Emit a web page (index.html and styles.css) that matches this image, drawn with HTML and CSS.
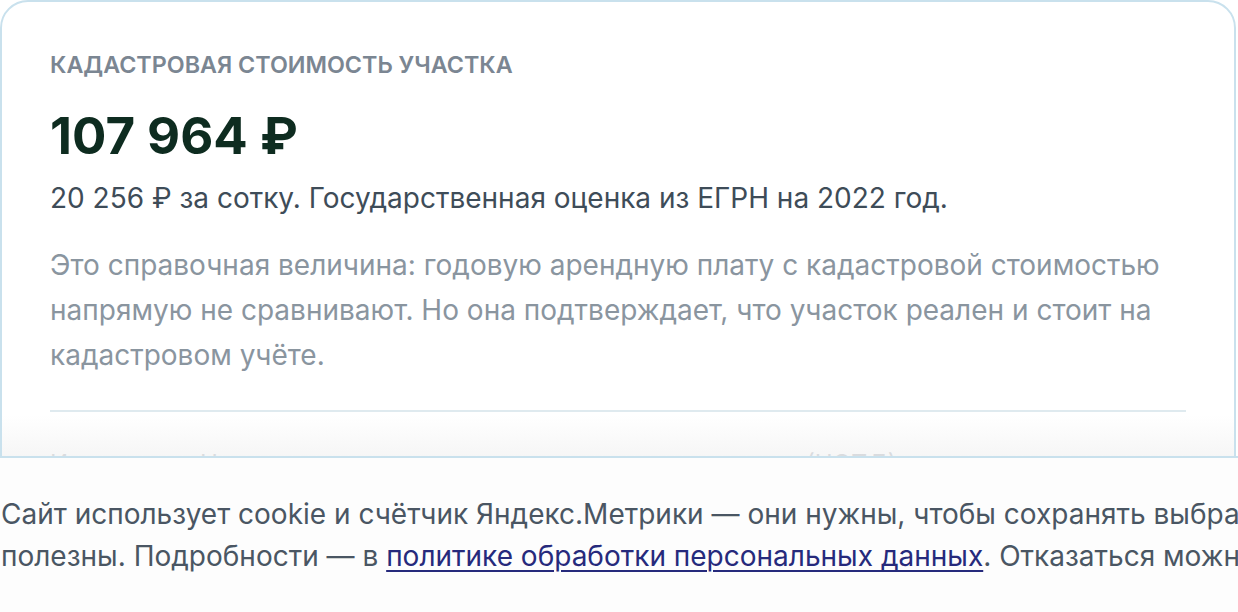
FILE: index.html
```html
<!DOCTYPE html>
<html lang="ru">
<head>
<meta charset="UTF-8">
<meta name="viewport" content="width=device-width, initial-scale=1.0">
<title>Кадастровая стоимость участка</title>
<link rel="stylesheet" href="styles.css">
</head>
<body>

<!-- Карточка со стоимостью -->
<section class="cost-card">
    <h3 class="cost-label">Кадастровая стоимость участка</h3>
    <div class="cost-value">107 964 ₽</div>
    <p class="cost-sub">20 256 ₽ за сотку. Государственная оценка из ЕГРН на 2022 год.</p>
    <p class="cost-note">Это справочная величина: годовую арендную плату с кадастровой стоимостью напрямую не сравнивают. Но она подтверждает, что участок реален и стоит на кадастровом учёте.</p>
    <hr class="cost-divider">
    <p class="cost-source">Источник — Национальная система пространственных данных (НСПД)</p>
    <div class="cost-fade"></div>
</section>

<!-- Cookie banner -->
<div class="cookie-banner">
    <p class="cookie-text">Сайт использует cookie и счётчик Яндекс.Метрики — они нужны, чтобы сохранять выбранные фильтры и понимать, какие разделы<br>полезны. Подробности — в <a href="#">политике обработки персональных данных</a>. Отказаться можно в настройках браузера.</p>
</div>

</body>
</html>
```

FILE: styles.css
```css
body {
    font-family: Inter, "Liberation Sans", sans-serif;
    margin: 0;
    padding: 0;
    background: #fff;
    overflow: hidden;
}

.cost-card {
    position: relative;
    margin: 0 2px 0 0;
    padding: 48px 48px 40px;
    border: 2px solid #c9e1ed;
    border-radius: 28px;
    background: #fff;
    height: 600px;
}

.cost-label {
    margin: 0 0 26px;
    font-size: 23.3px;
    font-weight: 600;
    text-transform: uppercase;
    color: #7b8692;
    line-height: 30px;
}

.cost-value {
    font-size: 51px;
    font-weight: 700;
    color: #0e2c20;
    line-height: 60px;
    margin-bottom: 12px;
}

.cost-sub {
    margin: 0 0 25px;
    font-size: 28px;
    color: #3e4c58;
    line-height: 40px;
}

.cost-note {
    margin: 0;
    font-size: 28px;
    color: #8a959f;
    line-height: 45px;
}

.cost-divider {
    border: 0;
    border-top: 2px solid #dfeaef;
    margin: 32px 0 32px;
}

.cost-source {
    margin: 0;
    font-size: 24px;
    color: #7b8692;
    line-height: 40px;
}

.cost-fade {
    position: absolute;
    left: 0;
    right: 0;
    top: 413px;
    height: 60px;
    background: linear-gradient(to bottom, rgba(255, 255, 255, 0.5), rgba(241, 241, 241, 0.92));
}

.cookie-banner {
    position: fixed;
    left: 0;
    right: 0;
    top: 456px;
    bottom: 0;
    background: #fdfdfd;
    border-top: 2px solid #c9e1ed;
    padding: 0 0 0 1px;
    overflow: hidden;
}

.cookie-text {
    margin: 35px 0 0;
    font-size: 28px;
    color: #4a5663;
    line-height: 42px;
    white-space: nowrap;
}

.cookie-text a {
    color: #262a7c;
    text-decoration: underline;
    text-decoration-thickness: 2px;
    text-underline-offset: 4px;
}
```
